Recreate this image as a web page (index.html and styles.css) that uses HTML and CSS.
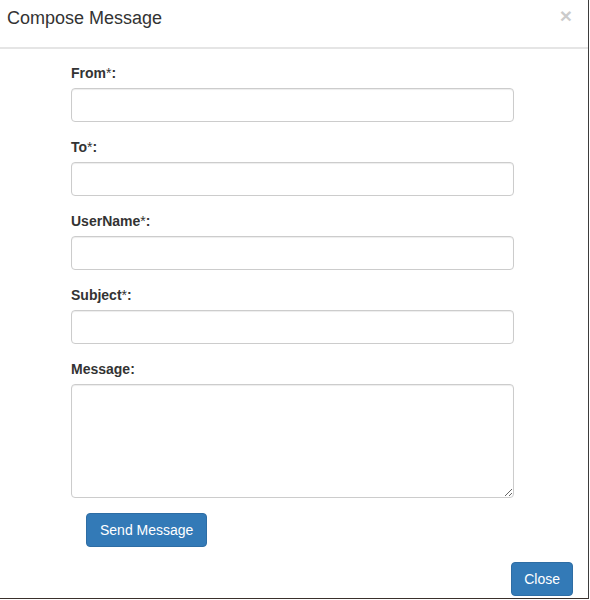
FILE: index.html
```html
<!DOCTYPE html>
<html>
<head>
<meta charset="utf-8">
<link rel="stylesheet" href="styles.css">
</head>
<body>
<div class="modal">
  <div class="modal-header">
    <h4 class="modal-title">Compose Message</h4>
    <button class="close" type="button">&times;</button>
  </div>
  <div class="modal-body">
    <form class="compose-form">
      <div class="form-group">
        <label>From<span class="req">*</span>:</label>
        <input class="form-control" type="text">
      </div>
      <div class="form-group">
        <label>To<span class="req">*</span>:</label>
        <input class="form-control" type="text">
      </div>
      <div class="form-group">
        <label>UserName<span class="req">*</span>:</label>
        <input class="form-control" type="text">
      </div>
      <div class="form-group">
        <label>Subject<span class="req">*</span>:</label>
        <input class="form-control" type="text">
      </div>
      <div class="form-group">
        <label>Message:</label>
        <textarea class="form-control" rows="5"></textarea>
      </div>
      <div class="send-row">
        <button class="btn btn-primary btn-send" type="button">Send Message</button>
      </div>
    </form>
  </div>
  <div class="modal-footer">
    <button class="btn btn-primary" type="button">Close</button>
  </div>
</div>
</body>
</html>
```
FILE: styles.css
```css
* { box-sizing: border-box; }
html, body {
  margin: 0;
  padding: 0;
  background: #fff;
}
body {
  font-family: "Liberation Sans", Arial, sans-serif;
  font-size: 14px;
  line-height: 1.42857;
  color: #333;
}
.modal {
  width: 589px;
  height: 599px;
  background: #fff;
  border-right: 1px solid #3d3d3d;
  border-bottom: 1px solid #3a302b;
  display: flex;
  flex-direction: column;
}
.modal-header {
  display: flex;
  justify-content: space-between;
  align-items: flex-start;
  height: 49px;
  padding: 6px 16px 0 7px;
  border-bottom: 2px solid #e5e5e5;
}
.modal-title {
  margin: 0;
  font-size: 18px;
  font-weight: normal;
  line-height: 25px;
}
.close {
  background: none;
  border: 0;
  padding: 0;
  margin: 0;
  font-family: "Liberation Sans", Arial, sans-serif;
  font-size: 21px;
  font-weight: bold;
  line-height: 20px;
  color: #000;
  opacity: 0.2;
  cursor: pointer;
}
.modal-body {
  padding: 14px 0 0 71px;
}
.compose-form {
  width: 443px;
}
.form-group {
  margin-bottom: 15px;
}
label {
  display: block;
  margin-bottom: 5px;
  font-weight: bold;
  font-size: 14px;
  line-height: 20px;
}
.req {
  font-weight: normal;
}
.form-control {
  display: block;
  width: 100%;
  height: 34px;
  padding: 6px 12px;
  font-family: inherit;
  font-size: 14px;
  line-height: 20px;
  color: #555;
  background: #fff;
  border: 1px solid #ccc;
  border-radius: 4px;
  box-shadow: inset 0 1px 1px rgba(0,0,0,.075);
}
textarea.form-control {
  height: 114px;
  resize: vertical;
}
.send-row {
  padding-left: 15px;
}
.btn {
  display: inline-block;
  padding: 6px 12px;
  font-family: inherit;
  font-size: 14px;
  line-height: 20px;
  border: 1px solid transparent;
  border-radius: 4px;
  cursor: pointer;
}
.btn-send {
  padding: 6px 13px;
}
.btn-primary {
  color: #fff;
  background: #337ab7;
  border-color: #2e6da4;
}
.modal-footer {
  display: flex;
  justify-content: flex-end;
  padding: 15px 15px 0 0;
}
```
